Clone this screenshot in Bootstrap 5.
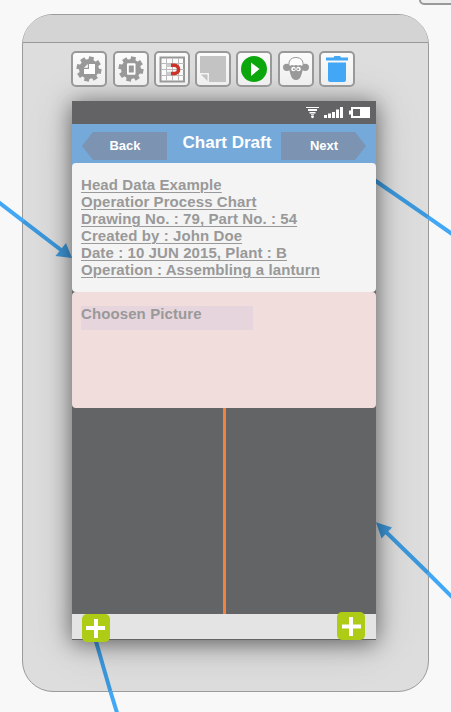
<!DOCTYPE html>
<html lang="en">
<head>
<meta charset="utf-8">
<meta name="viewport" content="width=device-width, initial-scale=1">
<title>Chart Draft</title>
<link href="https://cdn.jsdelivr.net/npm/bootstrap@5.3.0/dist/css/bootstrap.min.css" rel="stylesheet">
<style>
html,body{height:712px;overflow:hidden}
body{background:#f8f8f8;font-family:"Liberation Sans",Arial,sans-serif;font-weight:700}
.device{width:407px;height:678px;margin:14px 0 0 22px;border:1px solid #9b9b9b;border-radius:31px;background:#ddd}
.device-top{height:28px;background:#d4d4d4;border-bottom:1px solid #999}
.wires{left:0;top:0;z-index:0;pointer-events:none}
.stub{left:419px;top:-20px;width:50px;height:25px;border:2px solid #999;border-radius:5px;background:#eee}
.tools{padding:8px 0 0 48.300px;gap:5.25px;z-index:2}
.tool{width:36px;height:36px;border:2px solid #999;border-radius:5px;background:linear-gradient(#fbfbfb,#efefef)}
.tool svg{display:block}
.phone{width:304px;height:539px;margin:14px 0 0 49px;background:#626466;box-shadow:0 3px 22px rgba(0,0,0,.55),0 4px 50px rgba(0,0,0,.1);z-index:1}
.status{height:23px;background:#636365;padding-right:5px}
.bar{height:44px;margin-bottom:-5px;background:#74a9d9;padding:0 10px 5px}
.arrow-btn{width:85px;height:28px;margin-top:5px;padding-left:1px;background:#7c93b1;color:#fff;font-size:13px;line-height:28px;text-align:center}
.back{clip-path:polygon(11px 0,100% 0,100% 100%,11px 100%,0 50%)}
.next{clip-path:polygon(0 0,74px 0,100% 50%,74px 100%,0 100%)}
.bar-title{font-size:17px;line-height:20px;color:#fff;margin:-1px 0 0 6px;padding-bottom:1px}
.head-card{height:129px;padding:13px 9px;border-radius:4px;background:#f4f4f4;color:#999;font-size:15px;line-height:17px;letter-spacing:.09px}
.head-card u{display:table;text-decoration-thickness:1px;text-underline-offset:2px}
.pic-card{height:116px;padding:14px 9px;border-radius:4px;background:#f0dddc;color:#999;font-size:15px;letter-spacing:.1px}
.pic-label{width:172px;height:24px;line-height:16px;background:#e7d5dd}
.canvas-area{height:206px}
.flow{width:3px;background:#f5823c}
.foot{height:25px;background:#e4e4e4;padding:0 11px 0 10px}
.plus{width:28px;height:28px;border-radius:5px;background:#aecb15}
.plus.up{margin-top:-2px}
</style>
<script src="https://cdn.jsdelivr.net/npm/bootstrap@5.3.0/dist/js/bootstrap.bundle.min.js"></script>
</head>
<body class="position-relative">
<div class="stub position-absolute"></div>
<div class="d-flow-root overflow-hidden">
<main class="device">
  <div class="device-top rounded-top-5"></div>
  <svg class="wires position-absolute" width="451" height="712" viewBox="0 0 451 712">
    <g stroke="#42a7f5" stroke-width="4" fill="none">
      <path d="M-3 201L23 220.800M428 217.200L455 236M428 573L455 600M110.300 691L118 716"/>
    </g>
    <g stroke="#3b98dc" stroke-width="4" fill="none">
      <path d="M23 220.800L63 251.500M370 177L428 217.200M386 532L428 573M95 638L110.300 691"/>
    </g>
    <path d="M72 258L66 243L55.500 256Z M376 522.300L392 527.500L381.500 538.500Z" fill="#3f97d9"/>
  </svg>
  <div class="tools d-flex position-relative">
    <div class="tool"><svg width="32" height="32" viewBox="0 0 32 32"><use href="#gear"/><path d="M16 11h6v10H11v-5h5z" fill="#fff"/><path d="M14.800 11v3.800H11z" fill="#fff"/></svg></div>
    <div class="tool"><svg width="32" height="32" viewBox="0 0 32 32"><use href="#gear"/><rect x="12" y="10.300" width="8.500" height="11.500" rx="1" fill="#fff"/><rect x="13.800" y="12.500" width="5" height="7" fill="#999"/></svg></div>
    <div class="tool"><svg width="32" height="32" viewBox="0 0 32 32"><rect x="4.500" y="4.500" width="23.500" height="24" fill="#fbfbfb" stroke="#999" stroke-width="2"/><path d="M10.500 5v23M16.500 5v23M22.500 5v23M5 10.500h23M5 16.500h23M5 22.500h23" stroke="#bbb"/><path d="M10.500 12.300H15M10.500 20.500H15" stroke="#ccc" stroke-width="3.500"/><path d="M15 12.300h3.500a4.100 4.100 0 0 1 0 8.200H15" fill="none" stroke="#cb3427" stroke-width="3.500"/></svg></div>
    <div class="tool"><svg width="32" height="32" viewBox="0 0 32 32"><path d="M3 3h26v26H12v-9H3zM4 21.500h6.500V28z" fill="#c3c3c3"/></svg></div>
    <div class="tool"><svg width="32" height="32" viewBox="0 0 32 32"><circle cx="16" cy="16" r="13" fill="#0ca70c"/><path d="M13 9.500L21.500 16L13 23z" fill="#fff"/></svg></div>
    <div class="tool"><svg width="32" height="32" viewBox="0 0 32 32"><g fill="#999"><ellipse cx="6.800" cy="14.300" rx="3.800" ry="3.600"/><ellipse cx="25.200" cy="14.300" rx="3.800" ry="3.600"/><path d="M7 12.500H25L23 16L21.500 21.500Q20 27 16 27T10.500 21.500L9 16z"/></g><path d="M8.800 12.500Q8.500 4.500 16 4.500T23.200 12.500Q21.500 13.700 20 12.500Q18 13.700 16 12.500Q14 13.700 12 12.500Q10.500 13.700 8.800 12.500z" fill="#fff" stroke="#999"/><circle cx="13.500" cy="16" r="2.300" fill="#fff"/><circle cx="18.500" cy="16" r="2.300" fill="#fff"/><circle cx="13.900" cy="16.200" r="1" fill="#999"/><circle cx="18.100" cy="16.200" r="1" fill="#999"/></svg></div>
    <div class="tool"><svg width="32" height="32" viewBox="0 0 32 32"><path d="M5 4.500h7.500l1-1.500h5.500l1 1.500H27V7.500H5z M7 9.500h18V27q0 2-2 2H9q-2 0-2-2z" fill="#42a7f5"/></svg></div>
  </div>
  <section class="phone position-relative">
    <div class="status d-flex justify-content-end align-items-center">
      <svg width="66" height="13" viewBox="0 0 66 13" fill="#fff"><path d="M1 1h13v1H1zM3 3h9v2H3zM4.500 6h6v1.500h-6zM6 8.200h3v1H6z"/><circle cx="7.500" cy="10.800" r="1.400"/><path d="M19 9h3v3h-3zM23 7.500h3V12h-3zM27 6h3v6h-3zM31 3.500h3V12h-3zM35 1h3v11h-3zM46 1h19v11H46V8.500h-2v-4h2zM48 3v7h7V3z" fill-rule="evenodd"/></svg>
    </div>
    <nav class="bar d-flex justify-content-between align-items-center">
      <div class="arrow-btn back">Back</div>
      <div class="bar-title">Chart Draft</div>
      <div class="arrow-btn next">Next</div>
    </nav>
    <div class="head-card">
      <u>Head Data Example</u>
      <u>Operatior Process Chart</u>
      <u>Drawing No. : 79, Part No. : 54</u>
      <u>Created by : John Doe</u>
      <u>Date : 10 JUN 2015, Plant : B</u>
      <u>Operation : Assembling a lanturn</u>
    </div>
    <div class="pic-card"><div class="pic-label">Choosen Picture</div></div>
    <div class="canvas-area d-flex justify-content-center"><div class="flow"></div></div>
    <div class="foot d-flex justify-content-between align-items-start">
      <div class="plus"><svg width="28" height="28" viewBox="0 0 28 28" class="d-block"><path d="M14 5v19M4 14h19" stroke="#fff" stroke-width="4"/></svg></div>
      <div class="plus up"><svg width="28" height="28" viewBox="0 0 28 28" class="d-block"><path d="M14 5v19M5 14.500h19" stroke="#fff" stroke-width="4"/></svg></div>
    </div>
  </section>
</main>
</div>
<svg width="0" height="0" class="position-absolute">
  <defs><g id="gear"><circle cx="16" cy="16" r="10" fill="#999"/><g fill="#999" transform="rotate(12 16 16)"><path id="tooth" d="M13.500 3.500h5v25h-5z"/><use href="#tooth" transform="rotate(45 16 16)"/><use href="#tooth" transform="rotate(90 16 16)"/><use href="#tooth" transform="rotate(135 16 16)"/></g></g></defs>
</svg>
</body>
</html>
